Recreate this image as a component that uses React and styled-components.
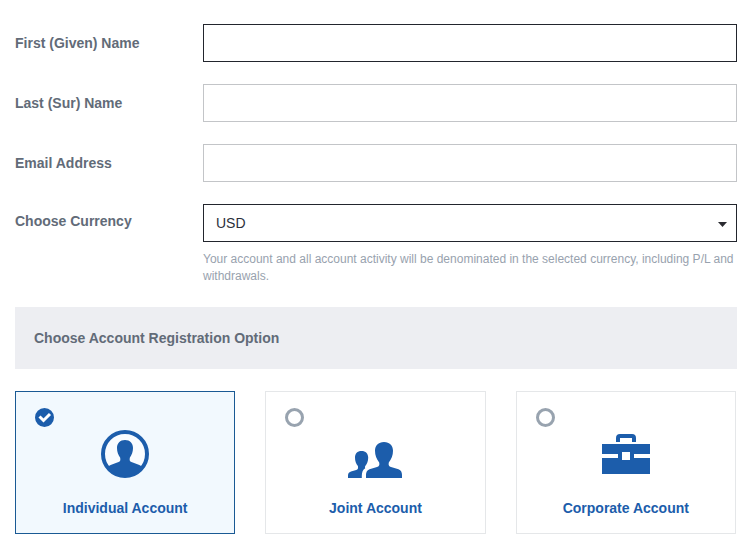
import React, { useState } from 'react';
import styled, { createGlobalStyle } from 'styled-components';

const GlobalStyle = createGlobalStyle`
  * {
    box-sizing: border-box;
  }

  body {
    margin: 0;
    background: #fff;
    color: #626b78;
    font: 14px/20px "Liberation Sans", Arial, sans-serif;
  }
`;

const Form = styled.form`
  padding: 24px 15px 19px;
`;

const Fields = styled.div`
  display: grid;
  gap: 22px;
`;

const Field = styled.div`
  display: grid;
  grid-template-columns: 188px 1fr;
`;

const Label = styled.label`
  padding-top: ${props => (props.$raised ? '7px' : '9px')};
  font-weight: bold;
`;

const TextInput = styled.input`
  width: 100%;
  height: 38px;
  padding: 0 12px;
  border: 1px solid ${props => (props.$active ? '#22252d' : '#c3c5c8')};
  border-radius: 0;
  background: #fff;
  color: #2b303b;
  font: inherit;
`;

const SelectBox = styled.div`
  display: grid;
  align-items: center;

  > * {
    grid-area: 1 / 1;
  }
`;

const Select = styled.select`
  appearance: none;
  width: 100%;
  height: 38px;
  padding: 0 30px 0 12px;
  border: 1px solid #22252d;
  border-radius: 0;
  background: #fff;
  color: #2b303b;
  font: inherit;
`;

const Caret = styled.svg`
  justify-self: end;
  width: 9px;
  height: 5px;
  margin: 2px 10px 0 0;
  fill: #2a2b30;
  pointer-events: none;
`;

const Hint = styled.p`
  margin: 9px 0 0;
  color: #98a2ae;
  font-size: 12px;
  line-height: 17px;
`;

const Options = styled.fieldset`
  min-width: 0;
  margin: 22px 0 0;
  padding: 0;
  border: 0;
`;

const OptionsTitle = styled.legend`
  width: 100%;
  margin-bottom: 22px;
  padding: 21px 19px;
  background: #edeef2;
  font-weight: bold;
`;

const Cards = styled.div`
  display: grid;
  grid-template-columns: repeat(3, 1fr);
  gap: 30px;
  padding-right: 1px;
`;

const Card = styled.label`
  display: flex;
  flex-direction: column;
  align-items: center;
  padding: 16px 19px 15px;
  border: 1px solid ${props => (props.$selected ? '#1a5a94' : '#e5e7e9')};
  background: ${props => (props.$selected ? '#f2f9fe' : '#fff')};
  color: #1c5dab;
  font-weight: bold;
  cursor: pointer;
`;

const RadioMark = styled.span`
  display: grid;
  align-self: flex-start;

  > * {
    grid-area: 1 / 1;
  }
`;

const Radio = styled.input`
  appearance: none;
  width: 19px;
  height: 19px;
  margin: 0;
  border: 3px solid #98a3af;
  border-radius: 50%;

  &:checked {
    border-color: #1c5dab;
    background: #1c5dab;
  }
`;

const Tick = styled.svg`
  width: 19px;
  height: 19px;
  fill: none;
  stroke: #fff;
  stroke-width: 3;
  pointer-events: none;
`;

const Icon = styled.svg`
  height: 48px;
  margin: 3px 0 20px;
  fill: #1c5dab;
`;

const IndividualIcon = () => (
  <Icon width="48" viewBox="0 0 48 48" aria-hidden="true">
    <circle cx="24" cy="24" r="22" fill="#f9fcff" stroke="#1c5dab" strokeWidth="4" />
    <path d="M24 10C19 10 16 13.300 16 18C16 22 17.200 25 19.200 27.700C19.600 30.400 19.200 31.300 17.600 32C14 33.600 10.500 34.300 7 36.500C11 42.500 17 46 24 46C31 46 37 42.500 41 36.500C37.500 34.300 34 33.600 30.400 32C28.800 31.300 28.400 30.400 28.800 27.700C30.800 25 32 22 32 18C32 13.300 29 10 24 10Z" />
  </Icon>
);

const JointIcon = () => (
  <Icon width="54" viewBox="0 0 54 48" aria-hidden="true">
    <path d="M36 12C30.300 12 27 15.500 27 20.800C27 25.500 28.500 29 31.200 32.500C31.800 35.200 31 36.300 29 37L21.500 39.300C18.800 40.300 18 42.500 18 45V48H54V45C54 42.500 53.200 40.300 50.500 39.300L43 37C41 36.300 40.200 35.200 40.800 32.500C43.500 29 45 25.500 45 20.800C45 15.500 41.700 12 36 12Z" />
    <path d="M13.500 21C9.300 21 7 23.700 7 27.500C7 31 8 33.600 9.900 36C10.400 38.300 9.900 39.500 8.200 40.100L3 41.500C.8 42.200 0 43.500 0 45.500V48H13.800V46C13.800 42.300 14.800 39.800 17.200 38.200C16.800 37.400 16.800 36.800 17.300 36C19.100 33.600 20.200 31 20.200 27.500C20.200 23.700 17.700 21 13.500 21Z" />
  </Icon>
);

const CorporateIcon = () => (
  <Icon width="48" viewBox="0 0 48 48" aria-hidden="true">
    <path d="M14 12V8Q14 4 18 4H30Q34 4 34 8V12H30V8H18V12Z" />
    <path d="M0 14H48V24H32V22H28V22H20V24H16V24H0Z" />
    <path d="M16 22H20V30H28V22H32V28H48V44H0V28H16Z" />
  </Icon>
);

const textFields = [
  { name: 'firstName', label: 'First (Given) Name', active: true },
  { name: 'lastName', label: 'Last (Sur) Name' },
  { name: 'email', label: 'Email Address', type: 'email' },
];

const accountTypes = [
  { value: 'individual', label: 'Individual Account', Picture: IndividualIcon },
  { value: 'joint', label: 'Joint Account', Picture: JointIcon },
  { value: 'corporate', label: 'Corporate Account', Picture: CorporateIcon },
];

const App = () => {
  const [account, setAccount] = useState('individual');

  return (
    <>
      <GlobalStyle />
      <Form>
        <Fields>
          {textFields.map(({ name, label, type = 'text', active }) => (
            <Field key={name}>
              <Label htmlFor={name}>{label}</Label>
              <TextInput id={name} name={name} type={type} $active={active} />
            </Field>
          ))}

          <Field>
            <Label htmlFor="currency" $raised>Choose Currency</Label>
            <div>
              <SelectBox>
                <Select id="currency" name="currency" aria-describedby="currency-hint">
                  <option>USD</option>
                </Select>
                <Caret viewBox="0 0 9 5" aria-hidden="true">
                  <path d="M0 0H9L4.500 5Z" />
                </Caret>
              </SelectBox>
              <Hint id="currency-hint">
                Your account and all account activity will be denominated in the selected currency, including P/L and withdrawals.
              </Hint>
            </div>
          </Field>
        </Fields>

        <Options>
          <OptionsTitle>Choose Account Registration Option</OptionsTitle>
          <Cards>
            {accountTypes.map(({ value, label, Picture }) => (
              <Card key={value} $selected={account === value}>
                <RadioMark>
                  <Radio
                    type="radio"
                    name="account"
                    value={value}
                    checked={account === value}
                    onChange={() => setAccount(value)}
                  />
                  {account === value && (
                    <Tick viewBox="0 0 19 19" aria-hidden="true">
                      <path d="M4.500 8.500L8.500 12.500L15 6" />
                    </Tick>
                  )}
                </RadioMark>
                <Picture />
                {label}
              </Card>
            ))}
          </Cards>
        </Options>
      </Form>
    </>
  );
};

export default App;
